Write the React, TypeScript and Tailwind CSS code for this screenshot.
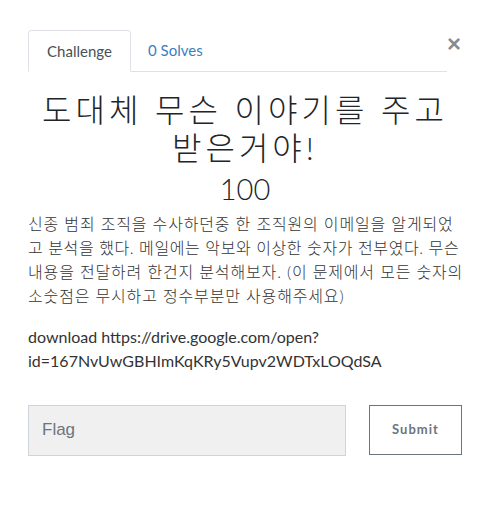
import React from 'react';

const sans = { fontFamily: 'Lato, "Noto Sans CJK KR", sans-serif' };

const descLines = [
  { text: '신종 범죄 조직을 수사하던중 한 조직원의 이메일을 알게되었', cls: 'tracking-[0.85px]' },
  { text: '고 분석을 했다. 메일에는 악보와 이상한 숫자가 전부였다. 무슨', cls: 'tracking-[0.6px]' },
  { text: '내용을 전달하려 한건지 분석해보자. (이 문제에서 모든 숫자의', cls: 'tracking-[0.85px]' },
  { text: '소숫점은 무시하고 정수부분만 사용해주세요)', cls: 'tracking-[0.85px]' },
];

export default function App() {
  return (
    <div className="min-h-[505px] w-[489px] bg-white text-[#212529]" style={sans}>
      <div className="pl-[28px] pt-[30px] w-[462px]">
        {/* Tabs + close */}
        <div className="flex items-start">
          <div className="flex w-[420px] border-b border-[#dee2e6]">
            <div className="-mb-px h-[42px] w-[103px] flex items-center justify-center rounded-t-[4px] border border-b-white border-[#dee2e6] bg-white text-[15px] text-[#495057]">
              Challenge
            </div>
            <div className="h-[41px] flex items-center px-[17px] text-[15px] text-[#3a7fc1]">
              0 Solves
            </div>
          </div>
          <button className="ml-auto mt-[2px] mr-[1px] text-[24px] leading-none font-bold text-[#000] opacity-45" style={{ fontFamily: '"Liberation Sans", sans-serif' }}>
            ×
          </button>
        </div>

        {/* Title */}
        <h3 className="mt-[19px] text-center text-[32px] leading-[1.2] font-light tracking-[4px] text-[#212529]">
          도대체 무슨 이야기를 주고 받은거야!
        </h3>
        <h4 className="mt-[4px] text-center text-[29px] leading-[1.2] font-light text-[#212529]">
          100
        </h4>

        {/* Description */}
        <div className="mt-[5px] text-[16px] leading-[24px] text-[#333]">
          <p className="font-light">
            {descLines.map((line, i) => (
              <span key={i} className={`block whitespace-nowrap ${line.cls}`}>{line.text}</span>
            ))}
          </p>
          <p className="mt-[17px] break-all">
            download https://drive.google.com/open?
            <br />
            id=167NvUwGBHImKqKRy5Vupv2WDTxLOQdSA
          </p>
        </div>

        {/* Flag form */}
        <div className="mt-[32px] flex items-start">
          <input
            placeholder="Flag"
            className="h-[51px] w-[318px] border border-[#ced4da] bg-[#f0f0f0] px-[13px] text-[17px] text-[#495057] placeholder:text-[#6c757d] outline-none"
            style={{ fontFamily: '"Liberation Sans", sans-serif' }}
          />
          <button className="ml-[23px] h-[50px] w-[93px] border border-[#6c757d] bg-white text-[13px] font-bold tracking-[0.08em] text-[#6c757d]">
            Submit
          </button>
        </div>
      </div>
    </div>
  );
}
